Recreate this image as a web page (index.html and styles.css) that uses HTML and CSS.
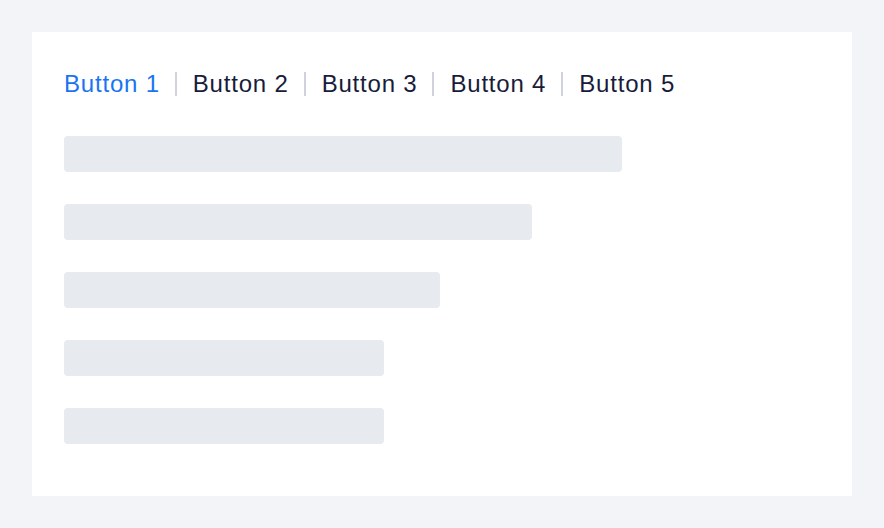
FILE: index.html
```html
<!DOCTYPE html>
<html>
<head>
<meta charset="utf-8">
<link rel="stylesheet" href="styles.css">
</head>
<body>
<div class="card">
  <div class="tabs">
    <span class="tab active">Button 1</span>
    <span class="sep"></span>
    <span class="tab">Button 2</span>
    <span class="sep"></span>
    <span class="tab">Button 3</span>
    <span class="sep"></span>
    <span class="tab">Button 4</span>
    <span class="sep"></span>
    <span class="tab">Button 5</span>
  </div>
  <div class="bars">
    <div class="bar w1"></div>
    <div class="bar w2"></div>
    <div class="bar w3"></div>
    <div class="bar w4"></div>
    <div class="bar w4"></div>
  </div>
</div>
</body>
</html>
```

FILE: styles.css
```css
html, body {
  margin: 0;
  padding: 0;
  background: #f3f4f8;
}
body {
  padding: 32px;
  font-family: "Liberation Sans", Arial, sans-serif;
}
.card {
  background: #ffffff;
  width: 820px;
  height: 464px;
  box-sizing: border-box;
  padding: 32px 32px 0 32px;
}
.tabs {
  display: flex;
  align-items: center;
  height: 40px;
  gap: 15px;
}
.tab {
  font-size: 24px;
  line-height: 40px;
  letter-spacing: 0.8px;
  color: #181c3b;
}
.tab.active {
  color: #1a74f2;
}
.sep {
  width: 2px;
  height: 24px;
  margin-right: 1px;
  background: #d0d3de;
}
.bars {
  margin-top: 32px;
  display: flex;
  flex-direction: column;
  gap: 32px;
}
.bar {
  height: 36px;
  border-radius: 4px;
  background: #e7eaef;
}
.w1 { width: 558px; }
.w2 { width: 468px; }
.w3 { width: 376px; }
.w4 { width: 320px; }
```
